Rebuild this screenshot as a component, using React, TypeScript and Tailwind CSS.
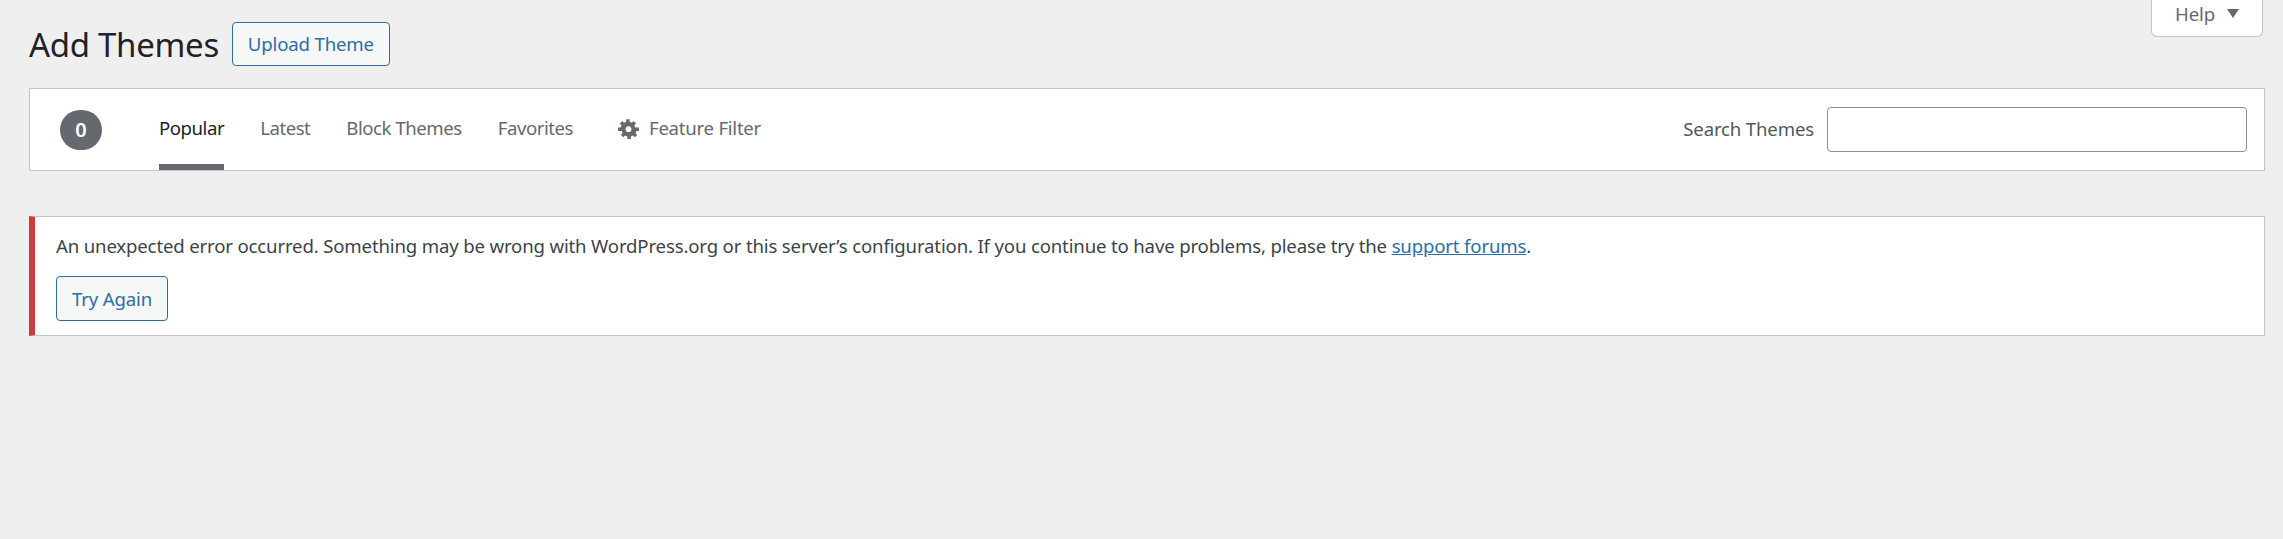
const FONT = "font-['Noto_Sans','Open_Sans',sans-serif]";

const TABS = [
  { label: "Popular", active: true },
  { label: "Latest", active: false },
  { label: "Block Themes", active: false },
  { label: "Favorites", active: false },
];

function GearIcon() {
  return (
    <svg viewBox="0 0 18 19" className="w-[21px] h-[22px] fill-[#646970]">
      <path
        fillRule="evenodd"
        d="M18 12h-2.18c-.17.7-.44 1.35-.81 1.93l1.54 1.54-2.1 2.1-1.54-1.54c-.58.36-1.23.64-1.91.81V19H8v-2.16c-.68-.17-1.33-.45-1.91-.81l-1.54 1.54-2.12-2.12 1.54-1.54c-.36-.58-.64-1.22-.81-1.91H0V9.04h2.17c.17-.69.45-1.34.82-1.93L1.45 5.57l2.12-2.12 1.54 1.54c.58-.37 1.23-.65 1.9-.82V2h2.96v2.17c.68.17 1.33.45 1.9.82l1.55-1.55 2.11 2.11-1.55 1.55c.37.58.65 1.23.82 1.91H18V12zM11.5 10.5a2.5 2.5 0 1 0-5 0 2.5 2.5 0 1 0 5 0z"
      />
    </svg>
  );
}

export default function App() {
  return (
    <div className={`${FONT} relative min-h-[539px] bg-[#efefef] pl-[29px] pr-[18px] text-[18.6px] tracking-[-0.16px] text-[#3c434a]`}>
      {/* Help tab */}
      <button className="absolute top-0 right-[20px] flex h-[37px] w-[112px] items-center justify-center gap-[12px] rounded-b-[6px] border border-t-0 border-[#c3c4c7] bg-white pb-[9px] text-[#646970]">
        Help
        <span className="h-0 w-0 border-x-[6px] border-t-[9px] border-x-transparent border-t-[#646970]" />
      </button>

      {/* Heading */}
      <div className="flex h-[88px] items-start pt-[22px]">
        <h1 className="pt-[1px] text-[33px] leading-[44px] tracking-[-0.3px] text-[#1d2327]">Add Themes</h1>
        <button className="ml-[13px] flex h-[44px] w-[158px] items-center justify-center rounded-[4px] border border-[#2c6ea5] bg-[#f6f7f7] text-[#2c6ea5]">
          Upload Theme
        </button>
      </div>

      {/* Filter bar */}
      <div className="flex h-[83px] items-center border border-[#c3c4c7] bg-white pr-[17px] pl-[30px]">
        <span className="flex h-[40px] w-[42px] items-center justify-center rounded-full bg-[#646970] text-[20px] font-semibold text-white">
          0
        </span>
        <nav className="ml-[57px] flex h-full gap-[36px] tracking-[-0.46px]">
          {TABS.map(({ label, active }) => (
            <a
              key={label}
              className={`flex h-full items-center border-b-[6px] pt-[3px] ${
                active ? "border-[#646970] text-[#1d2327]" : "border-transparent text-[#646970]"
              }`}
            >
              {label}
            </a>
          ))}
        </nav>
        <a className="ml-[45px] flex h-full items-center gap-[10px] pb-[3px] tracking-[-0.25px] text-[#646970]">
          <GearIcon />
          Feature Filter
        </a>
        <label className="ml-auto pb-[1px] text-[#50575e]">Search Themes</label>
        <input className="ml-[13px] h-[45px] w-[420px] rounded-[4px] border border-[#8c8f94] bg-white" />
      </div>

      {/* Error notice */}
      <div className="mt-[45px] flex h-[120px] flex-col items-start border border-l-[6px] border-[#c3c4c7] border-l-[#cf3a3c] bg-white pt-[15px] pl-[21px]">
        <p className="leading-[28px]">
          An unexpected error occurred. Something may be wrong with WordPress.org or this server’s configuration. If you
          continue to have problems, please try the{" "}
          <a className="text-[#2c6ea5] underline">support forums</a>.
        </p>
        <button className="mt-[16px] flex h-[45px] w-[112px] items-center justify-center rounded-[4px] border border-[#2c6ea5] bg-[#f6f7f7] text-[#2c6ea5]">
          Try Again
        </button>
      </div>
    </div>
  );
}
